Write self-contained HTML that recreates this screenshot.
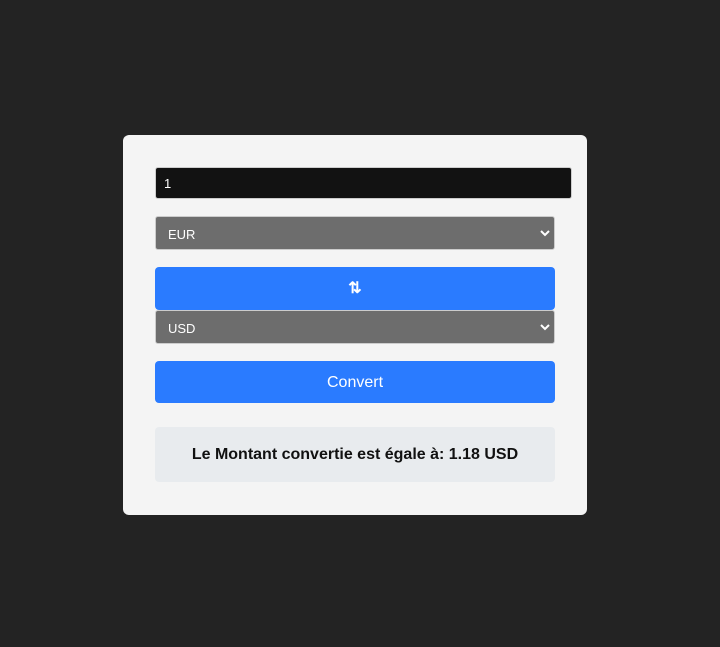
<!DOCTYPE html>
<html><head><meta charset="utf-8"><style>
body{margin:0;width:720px;height:647px;background:#232323;font-family:"Liberation Sans",sans-serif;position:relative;overflow:hidden}
.card{position:absolute;left:123px;top:135px;width:464px;height:380px;background:#f4f4f4;border-radius:6px}
.a{position:absolute;box-sizing:border-box}
.inp{left:32px;top:32px;width:417px;height:32px;background:#121212;border:1px solid #ccc;border-radius:3px;color:#fff;font-size:13px;padding:8px 8px}
.sel{left:32px;width:400px;height:34px;background:#6d6d6d;border:1px solid #ccc;border-radius:3px;color:#fff;font-size:13px;padding:10px 12px}
.sel svg{position:absolute;right:4px;top:12px}
.btn{left:32px;width:400px;background:#2a7bff;border-radius:4px;color:#fff;text-align:center}
.res{left:32px;top:292px;width:400px;height:55px;background:#e8ebee;border-radius:4px;text-align:center;font-weight:bold;font-size:16px;line-height:55px;color:#111}
</style></head><body>
<div class="card">
<div class="a inp">1</div>
<div class="a sel" style="top:81px">EUR<svg width="10" height="8" viewBox="0 0 10 8"><path d="M1 2l4 4 4-4" stroke="#fff" stroke-width="2" fill="none"/></svg></div>
<div class="a btn" style="top:132px;height:43px;line-height:43px;font-size:16px;font-weight:bold">⇅</div>
<div class="a sel" style="top:175px">USD<svg width="10" height="8" viewBox="0 0 10 8"><path d="M1 2l4 4 4-4" stroke="#fff" stroke-width="2" fill="none"/></svg></div>
<div class="a btn" style="top:226px;height:42px;line-height:44px;font-size:16px;font-weight:500">Convert</div>
<div class="a res">Le Montant convertie est égale à: 1.18 USD</div>
</div>
</body></html>
